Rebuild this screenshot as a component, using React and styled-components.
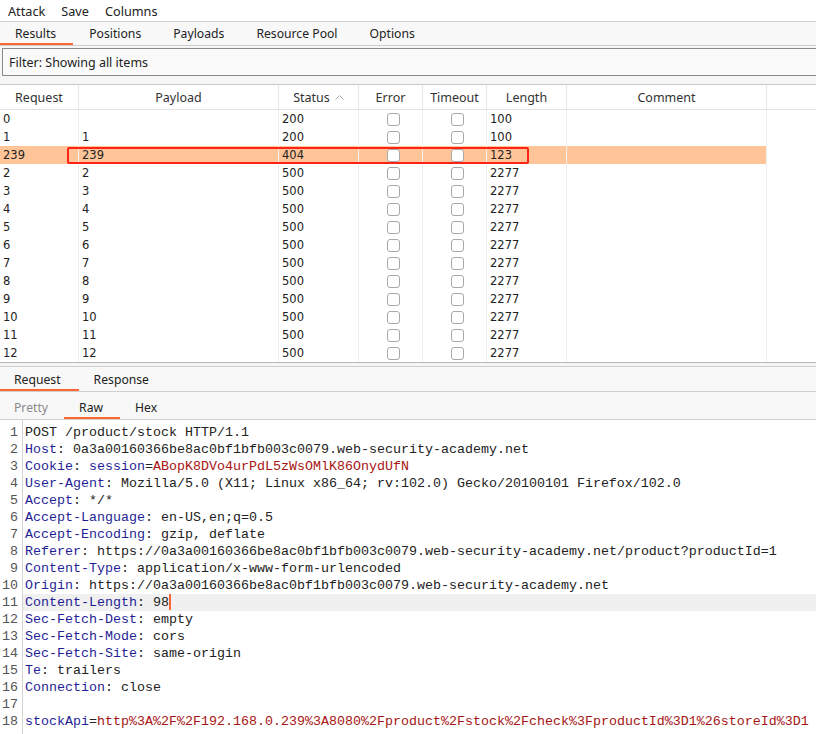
import React from 'react';
import styled, { createGlobalStyle } from 'styled-components';

const GlobalStyle = createGlobalStyle`
    html, body {
        margin: 0;
        padding: 0;
        background: #ffffff;
        font-family: "Noto Sans", "DejaVu Sans", sans-serif;
        font-size: 13px;
        color: #222;
    }
    * { box-sizing: border-box; }
`;

const COLS = '79px 200px 80px 64px 64px 80px 200px 1fr';

const Page = styled.div`
    width: 816px;
    height: 734px;
    overflow: hidden;
    display: flex;
    flex-direction: column;
`;

const MenuBar = styled.div`
    height: 21px;
    display: flex;
    align-items: center;
    gap: 16px;
    padding-left: 8px;
    color: #222;
    font-size: 12.7px;
`;

const TabBar = styled.div`
    height: ${(p) => p.h || 25}px;
    display: flex;
    align-items: stretch;
    background: #f8f8f8;
    border-top: ${(p) => (p.noTop ? 'none' : '1px solid #cfcfcf')};
    border-bottom: 1px solid #cfcfcf;
    padding-top: ${(p) => p.shift || 0}px;
`;

const Tab = styled.div`
    position: relative;
    display: flex;
    align-items: center;
    font-size: 12.2px;
    padding: 0 ${(p) => (p.right != null ? p.right : 16)}px 0 ${(p) => (p.left != null ? p.left : 16)}px;
    color: ${(p) => (p.dim ? '#8a8a8a' : '#222')};
    &::after {
        content: '';
        display: ${(p) => (p.active ? 'block' : 'none')};
        position: absolute;
        left: 0;
        right: 0;
        bottom: 0;
        height: 2px;
        background: #ff6633;
    }
`;

const FilterArea = styled.div`
    padding: 2px 0 8px 2px;
    background: #f6f6f6;
`;

const FilterBox = styled.div`
    height: 28px;
    border: 1px solid #8a8a8a;
    border-right: none;
    background: #fafafa;
    display: flex;
    align-items: center;
    padding-left: 6px;
    font-size: 12.5px;
`;

const Table = styled.div`
    border-top: 1px solid #c6c6c6;
    border-bottom: 1px solid #b8b8b8;
    height: 279px;
    overflow: hidden;
    background: #fff;
`;

const HeadRow = styled.div`
    display: grid;
    grid-template-columns: ${COLS};
    height: 25px;
    border-bottom: 1px solid #e2e2e2;
`;

const HeadCell = styled.div`
    display: flex;
    align-items: center;
    justify-content: center;
    gap: 5px;
    color: #333;
    font-size: 12.5px;
    border-right: ${(p) => (p.last ? 'none' : '1px solid #e6e6e6')};
`;

const SortArrow = styled.svg`
    width: 9px;
    height: 6px;
`;

const Row = styled.div`
    position: relative;
    display: grid;
    grid-template-columns: ${COLS};
    height: 18px;
`;

const Cell = styled.div`
    display: flex;
    align-items: center;
    padding-left: 3px;
    font-family: "DejaVu Sans", Verdana, sans-serif;
    font-size: 11.5px;
    color: #222;
    background: ${(p) => (p.hl ? '#ffc599' : 'transparent')};
    border-right: ${(p) => (p.last ? 'none' : '1px solid #f0f0f0')};
    justify-content: ${(p) => (p.center ? 'center' : 'flex-start')};
`;

const Check = styled.div`
    width: 13px;
    height: 13px;
    border: 1px solid #a8a8a8;
    border-radius: 3px;
    background: #fff;
    margin-left: 2px;
`;

const Marker = styled.div`
    position: absolute;
    left: 67px;
    top: 1px;
    width: 462px;
    height: 17px;
    border: 2px solid #ff2414;
    border-radius: 2px;
    pointer-events: none;
`;

const Splitter = styled.div`
    height: 3px;
    background: #f4f4f4;
`;

const Editor = styled.div`
    flex: 1;
    display: flex;
    flex-direction: column;
    padding-top: 4px;
    font-family: "Liberation Mono", "DejaVu Sans Mono", monospace;
    font-size: 13.33px;
    background: #fff;
    position: relative;
`;

const Gutter = styled.div`
    position: absolute;
    left: 0;
    top: 0;
    bottom: 0;
    width: 23px;
    border-right: 1px solid #d4d4d4;
`;

const Line = styled.div`
    position: relative;
    display: flex;
    height: 17px;
    line-height: 17px;
    white-space: pre;
`;

const LineNo = styled.span`
    flex: 0 0 23px;
    text-align: right;
    padding-right: 5px;
    color: #555;
`;

const Code = styled.span`
    flex: 1;
    padding-left: 2px;
    color: #222;
    background: ${(p) => (p.hl ? '#f0f0f0' : 'transparent')};
`;

const Key = styled.span`
    color: #1f1f97;
`;

const Val = styled.span`
    color: #a81414;
`;

const Caret = styled.span`
    display: inline-block;
    width: 2px;
    height: 16px;
    vertical-align: top;
    background: #ff6633;
`;

const rows = [
    ['0', '', '200', '100'],
    ['1', '1', '200', '100'],
    ['239', '239', '404', '123', true],
    ['2', '2', '500', '2277'],
    ['3', '3', '500', '2277'],
    ['4', '4', '500', '2277'],
    ['5', '5', '500', '2277'],
    ['6', '6', '500', '2277'],
    ['7', '7', '500', '2277'],
    ['8', '8', '500', '2277'],
    ['9', '9', '500', '2277'],
    ['10', '10', '500', '2277'],
    ['11', '11', '500', '2277'],
    ['12', '12', '500', '2277'],
];

const host = '0a3a00160366be8ac0bf1bfb003c0079.web-security-academy.net';

const lines = [
    [null, 'POST /product/stock HTTP/1.1'],
    ['Host', host],
    ['Cookie', 'cookie'],
    ['User-Agent', 'Mozilla/5.0 (X11; Linux x86_64; rv:102.0) Gecko/20100101 Firefox/102.0'],
    ['Accept', '*/*'],
    ['Accept-Language', 'en-US,en;q=0.5'],
    ['Accept-Encoding', 'gzip, deflate'],
    ['Referer', `https://${host}/product?productId=1`],
    ['Content-Type', 'application/x-www-form-urlencoded'],
    ['Origin', `https://${host}`],
    ['Content-Length', 'len'],
    ['Sec-Fetch-Dest', 'empty'],
    ['Sec-Fetch-Mode', 'cors'],
    ['Sec-Fetch-Site', 'same-origin'],
    ['Te', 'trailers'],
    ['Connection', 'close'],
    [null, ''],
    ['stockApi', 'body'],
];

const renderLine = (key, value) => {
    if (key === null) return value;
    if (value === 'cookie') {
        return (
            <>
                <Key>Cookie</Key>: <Key>session</Key>=<Val>ABopK8DVo4urPdL5zWsOMlK86OnydUfN</Val>
            </>
        );
    }
    if (value === 'len') {
        return (
            <>
                <Key>Content-Length</Key>: 98<Caret />
            </>
        );
    }
    if (value === 'body') {
        return (
            <>
                <Key>stockApi</Key>=<Val>http%3A%2F%2F192.168.0.239%3A8080%2Fproduct%2Fstock%2Fcheck%3FproductId%3D1%26storeId%3D1</Val>
            </>
        );
    }
    return (
        <>
            <Key>{key}</Key>: {value}
        </>
    );
};

const App = () => {
    return (
        <>
            <GlobalStyle />
            <Page>
                <MenuBar>
                    <span>Attack</span>
                    <span>Save</span>
                    <span>Columns</span>
                </MenuBar>
                <TabBar>
                    <Tab active left={15} right={17}>Results</Tab>
                    <Tab>Positions</Tab>
                    <Tab>Payloads</Tab>
                    <Tab>Resource Pool</Tab>
                    <Tab>Options</Tab>
                </TabBar>
                <FilterArea>
                    <FilterBox>Filter: Showing all items</FilterBox>
                </FilterArea>
                <Table>
                    <HeadRow>
                        <HeadCell>Request</HeadCell>
                        <HeadCell>Payload</HeadCell>
                        <HeadCell>
                            Status
                            <SortArrow viewBox="0 0 9 6">
                                <path d="M0.5 5.5 L4.5 1.5 L8.5 5.5" fill="none" stroke="#b0b0b0" strokeWidth="1" />
                            </SortArrow>
                        </HeadCell>
                        <HeadCell>Error</HeadCell>
                        <HeadCell>Timeout</HeadCell>
                        <HeadCell>Length</HeadCell>
                        <HeadCell>Comment</HeadCell>
                        <HeadCell last />
                    </HeadRow>
                    {rows.map(([req, payload, status, length, hl]) => (
                        <Row key={req}>
                            <Cell hl={hl}>{req}</Cell>
                            <Cell hl={hl}>{payload}</Cell>
                            <Cell hl={hl}>{status}</Cell>
                            <Cell hl={hl} center><Check /></Cell>
                            <Cell hl={hl} center><Check /></Cell>
                            <Cell hl={hl}>{length}</Cell>
                            <Cell hl={hl} />
                            <Cell last />
                            {hl && <Marker />}
                        </Row>
                    ))}
                </Table>
                <Splitter />
                <TabBar h={26} shift={1}>
                    <Tab active left={14} right={18}>Request</Tab>
                    <Tab left={15} right={15}>Response</Tab>
                </TabBar>
                <TabBar h={28} noTop shift={3}>
                    <Tab dim left={14} right={16}>Pretty</Tab>
                    <Tab active left={15} right={17}>Raw</Tab>
                    <Tab left={15} right={15}>Hex</Tab>
                </TabBar>
                <Editor>
                    <Gutter />
                    {lines.map(([key, value], i) => (
                        <Line key={i}>
                            <LineNo>{i + 1}</LineNo>
                            <Code hl={i === 10}>{renderLine(key, value)}</Code>
                        </Line>
                    ))}
                </Editor>
            </Page>
        </>
    );
};

export default App;
